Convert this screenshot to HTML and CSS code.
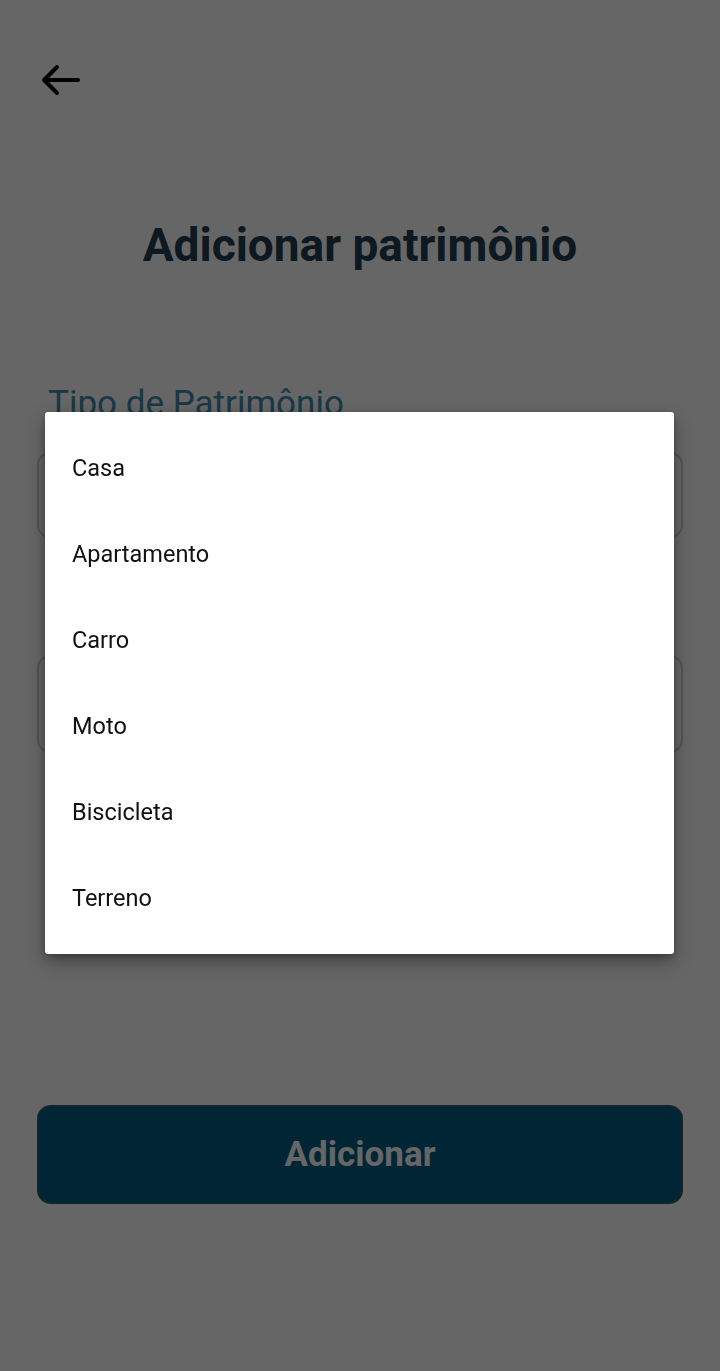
FILE: index.html
```html
<!DOCTYPE html>
<html lang="pt-BR">
<head>
<meta charset="utf-8">
<title>Adicionar patrimônio</title>
<link rel="stylesheet" href="styles.css">
</head>
<body>
<div class="screen">
  <header class="topbar">
    <button class="back" aria-label="Voltar">
      <svg width="40" height="34" viewBox="0 0 40 34" fill="none" stroke="#000" stroke-width="4" stroke-linecap="round" stroke-linejoin="round">
        <path d="M37 17H4M16 4L3 17l13 13"/>
      </svg>
    </button>
  </header>
  <h1 class="title">Adicionar patrimônio</h1>
  <form class="form">
    <div class="field">
      <label class="label">Tipo de Patrimônio</label>
      <div class="input"></div>
    </div>
    <div class="field second">
      <div class="input tall"></div>
    </div>
    <button type="button" class="submit">Adicionar</button>
  </form>
</div>
<div class="scrim"></div>
<ul class="menu">
  <li>Casa</li>
  <li>Apartamento</li>
  <li>Carro</li>
  <li>Moto</li>
  <li>Biscicleta</li>
  <li>Terreno</li>
</ul>
</body>
</html>
```
FILE: styles.css
```css
html, body {
  margin: 0;
  padding: 0;
  background: #ffffff;
  font-family: Roboto, "Liberation Sans", sans-serif;
}
.screen {
  width: 720px;
  height: 1371px;
  box-sizing: border-box;
  padding: 0 37px;
  display: flex;
  flex-direction: column;
}
.topbar {
  height: 160px;
  display: flex;
  align-items: flex-start;
  padding-top: 63px;
  box-sizing: border-box;
}
.back {
  border: 0;
  background: none;
  padding: 0;
  margin-left: 4px;
  width: 40px;
  height: 34px;
  display: block;
}
.back svg { display: block; }
.title {
  margin: 57px 0 0;
  text-align: center;
  font-size: 46px;
  font-weight: 700;
  line-height: 56px;
  color: #223d52;
}
.form {
  display: flex;
  flex-direction: column;
  margin-top: 109px;
}
.field {
  display: flex;
  flex-direction: column;
}
.label {
  margin-left: 11px;
  font-size: 35px;
  line-height: 44px;
  color: #3f8db0;
}
.input {
  margin-top: 26px;
  height: 86px;
  border: 2px solid #cfcfcf;
  border-radius: 13px;
  box-sizing: border-box;
  background: #fff;
}
.second { margin-top: 117px; }
.input.tall { margin-top: 0; height: 98px; }
.submit {
  margin-top: 352px;
  height: 99px;
  border: 2px solid #2a5d74;
  border-radius: 14px;
  background: #005c85;
  color: #ffffff;
  font-family: Roboto, "Liberation Sans", sans-serif;
  font-size: 35px;
  font-weight: 700;
}
.scrim {
  position: fixed;
  inset: 0;
  background: rgba(0, 0, 0, 0.6);
}
.menu {
  position: absolute;
  left: 45px;
  top: 412px;
  width: 629px;
  margin: 0;
  padding: 13px 0;
  list-style: none;
  background: #ffffff;
  border-radius: 3px;
  box-shadow: 0 8px 18px rgba(0, 0, 0, 0.35), 0 2px 6px rgba(0, 0, 0, 0.2);
}
.menu li {
  height: 86px;
  display: flex;
  align-items: center;
  padding-left: 27px;
  font-size: 23.5px;
  color: #111111;
}
```
